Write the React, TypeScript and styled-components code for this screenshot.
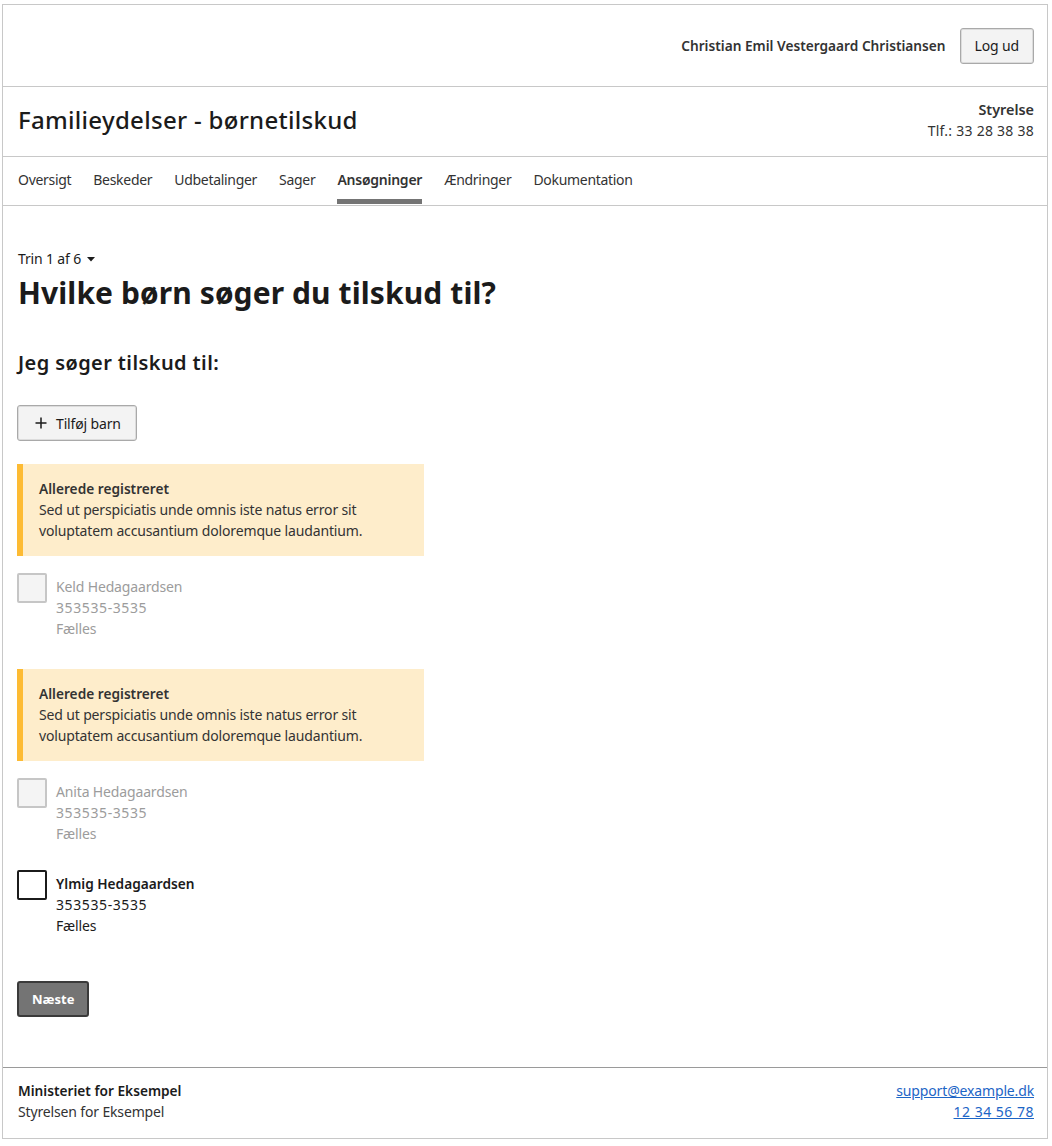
import React from "react";
import styled, { createGlobalStyle } from "styled-components";

const GlobalStyle = createGlobalStyle`
  html, body { margin: 0; padding: 0; background: #fff; }
  body {
    font-family: "Noto Sans", "Open Sans", sans-serif;
    font-size: 14px;
    line-height: 21px;
    letter-spacing: -0.15px;
    color: #1b1b1b;
  }
  * { box-sizing: border-box; }
`;

const Frame = styled.div`
  margin: 4px 0 0 2px;
  width: 1046px;
  border: 1px solid #c8c8c8;
  display: flex;
  flex-direction: column;
`;

const TopBar = styled.header`
  height: 82px;
  border-bottom: 1px solid #c8c8c8;
  display: flex;
  align-items: center;
  justify-content: flex-end;
  gap: 14px;
  padding: 0 13px 0 15px;
`;

const UserName = styled.span`
  font-size: 13.7px;
  font-weight: 600;
  letter-spacing: 0;
  color: #333;
`;

const SecondaryButton = styled.button`
  font-family: inherit;
  font-size: 14px;
  letter-spacing: -0.15px;
  color: #1b1b1b;
  background: #f3f3f3;
  border: 1px solid #a9a9a9;
  box-shadow: inset 0 0 0 1px #dcdcdc;
  border-radius: 3px;
  height: 36px;
  padding: 0 14px;
  display: inline-flex;
  align-items: center;
  gap: 9px;
  cursor: pointer;
`;

const TitleBar = styled.div`
  height: 70px;
  border-bottom: 1px solid #c8c8c8;
  display: flex;
  align-items: center;
  justify-content: space-between;
  padding: 0 13px 0 15px;
`;

const SiteTitle = styled.div`
  font-size: 24px;
  font-weight: 500;
  line-height: 32px;
  letter-spacing: 0.3px;
  color: #1b1b1b;
  padding-bottom: 3px;
`;

const Authority = styled.div`
  text-align: right;
  display: flex;
  flex-direction: column;
  padding-bottom: 3px;
`;

const AuthorityName = styled.span`
  font-size: 14.4px;
  font-weight: 600;
  letter-spacing: 0;
  color: #333;
  line-height: 21px;
`;

const AuthorityPhone = styled.span`
  font-size: 14px;
  letter-spacing: 0.25px;
  color: #333;
  line-height: 21px;
`;

const Nav = styled.nav`
  height: 49px;
  border-bottom: 1px solid #c8c8c8;
  display: flex;
  gap: 22px;
  padding: 0 15px;
`;

const NavItem = styled.a<{ $active?: boolean }>`
  display: flex;
  align-items: center;
  font-size: 14px;
  letter-spacing: ${(p) => (p.$active ? "-0.25px" : "-0.3px")};
  color: #333;
  font-weight: ${(p) => (p.$active ? 600 : 400)};
  text-decoration: none;
  border-bottom: 5px solid ${(p) => (p.$active ? "#747474" : "transparent")};
  margin-bottom: 1px;
  padding-top: 2px;
`;

const Main = styled.main`
  padding: 43px 15px 50px 14px;
  display: flex;
  flex-direction: column;
  align-items: flex-start;
`;

const Step = styled.div`
  font-size: 14px;
  line-height: 20px;
  color: #1b1b1b;
  display: flex;
  align-items: center;
  gap: 6px;
  padding-left: 1px;
`;

const H1 = styled.h1`
  margin: 5px 0 0 1px;
  font-size: 30px;
  line-height: 38px;
  font-weight: 700;
  letter-spacing: 0.1px;
  color: #1b1b1b;
`;

const H2 = styled.h2`
  margin: 37px 0 0 1px;
  font-size: 20px;
  line-height: 28px;
  font-weight: 600;
  letter-spacing: 0.4px;
  color: #1b1b1b;
`;

const AddButton = styled(SecondaryButton)`
  margin-top: 28px;
  padding: 0 15px 0 17px;
`;

const Alert = styled.div<{ $first?: boolean }>`
  margin-top: ${(p) => (p.$first ? 23 : 30)}px;
  width: 407px;
  background: #feedcb;
  border-left: 6px solid #fdbb33;
  padding: 14px 16px 15px;
  color: #333;
`;

const AlertTitle = styled.div`
  font-size: 13.7px;
  font-weight: 600;
  letter-spacing: 0;
  line-height: 21px;
`;

const AlertText = styled.div`
  font-size: 14px;
  line-height: 21px;
`;

const ChildRow = styled.label<{ $gap: number }>`
  margin-top: ${(p) => p.$gap}px;
  display: flex;
  gap: 9px;
  align-items: flex-start;
`;

const Box = styled.span<{ $disabled?: boolean }>`
  width: 30px;
  height: 30px;
  flex: none;
  border: 2px solid ${(p) => (p.$disabled ? "#c6c6c6" : "#1b1b1b")};
  background: ${(p) => (p.$disabled ? "#f4f4f4" : "#fff")};
  border-radius: 2px;
`;

const ChildInfo = styled.div<{ $disabled?: boolean }>`
  padding-top: 3px;
  display: flex;
  flex-direction: column;
  color: ${(p) => (p.$disabled ? "#9c9c9c" : "#1b1b1b")};
  font-size: 14px;
  line-height: 21px;
`;

const ChildName = styled.span<{ $disabled?: boolean }>`
  font-weight: ${(p) => (p.$disabled ? 400 : 600)};
  font-size: ${(p) => (p.$disabled ? 14 : 13.7)}px;
  letter-spacing: ${(p) => (p.$disabled ? "-0.15px" : "0")};
`;

const Cpr = styled.span`
  letter-spacing: 0.6px;
`;

const PrimaryButton = styled.button`
  margin-top: 45px;
  font-family: inherit;
  font-size: 13px;
  font-weight: 700;
  letter-spacing: 0;
  color: #fff;
  background: #747474;
  border: 2px solid #3a3a3a;
  border-radius: 3px;
  height: 36px;
  padding: 0 13px;
  cursor: pointer;
`;

const Footer = styled.footer`
  border-top: 1px solid #9a9a9a;
  padding: 12px 13px 16px 15px;
  display: flex;
  justify-content: space-between;
  font-size: 14px;
  line-height: 21px;
`;

const FooterCol = styled.div<{ $right?: boolean }>`
  display: flex;
  flex-direction: column;
  align-items: ${(p) => (p.$right ? "flex-end" : "flex-start")};
`;

const FooterStrong = styled.span`
  font-weight: 600;
  font-size: 13.7px;
  letter-spacing: 0;
  color: #1b1b1b;
`;

const FooterText = styled.span`
  color: #333;
`;

const FooterLink = styled.a<{ $digits?: boolean }>`
  color: #1d65c6;
  text-decoration: underline;
  font-size: 14px;
  letter-spacing: ${(p) => (p.$digits ? "0.5px" : "-0.15px")};
`;

const Plus = () => (
  <svg width="12" height="12" viewBox="0 0 12 12" aria-hidden>
    <path d="M6 0.5v11M0.5 6h11" stroke="#1b1b1b" strokeWidth="1.5" fill="none" />
  </svg>
);

const Caret = () => (
  <svg width="8" height="5" viewBox="0 0 8 5" aria-hidden>
    <path d="M0 0h8L4 4.5z" fill="#1b1b1b" />
  </svg>
);

const navItems = [
  "Oversigt",
  "Beskeder",
  "Udbetalinger",
  "Sager",
  "Ansøgninger",
  "Ændringer",
  "Dokumentation",
];

const alertBody = (
  <AlertText>
    Sed ut perspiciatis unde omnis iste natus error sit
    <br />
    voluptatem accusantium doloremque laudantium.
  </AlertText>
);

export default function App() {
  return (
    <>
      <GlobalStyle />
      <Frame>
        <TopBar>
          <UserName>Christian Emil Vestergaard Christiansen</UserName>
          <SecondaryButton>Log ud</SecondaryButton>
        </TopBar>
        <TitleBar>
          <SiteTitle>Familieydelser - børnetilskud</SiteTitle>
          <Authority>
            <AuthorityName>Styrelse</AuthorityName>
            <AuthorityPhone>Tlf.: 33 28 38 38</AuthorityPhone>
          </Authority>
        </TitleBar>
        <Nav>
          {navItems.map((n) => (
            <NavItem key={n} $active={n === "Ansøgninger"}>
              {n}
            </NavItem>
          ))}
        </Nav>
        <Main>
          <Step>
            Trin 1 af 6 <Caret />
          </Step>
          <H1>Hvilke børn søger du tilskud til?</H1>
          <H2>Jeg søger tilskud til:</H2>
          <AddButton>
            <Plus /> Tilføj barn
          </AddButton>

          <Alert $first>
            <AlertTitle>Allerede registreret</AlertTitle>
            {alertBody}
          </Alert>
          <ChildRow $gap={17}>
            <Box $disabled />
            <ChildInfo $disabled>
              <ChildName $disabled>Keld Hedagaardsen</ChildName>
              <Cpr>353535-3535</Cpr>
              <span>Fælles</span>
            </ChildInfo>
          </ChildRow>

          <Alert>
            <AlertTitle>Allerede registreret</AlertTitle>
            {alertBody}
          </Alert>
          <ChildRow $gap={17}>
            <Box $disabled />
            <ChildInfo $disabled>
              <ChildName $disabled>Anita Hedagaardsen</ChildName>
              <Cpr>353535-3535</Cpr>
              <span>Fælles</span>
            </ChildInfo>
          </ChildRow>

          <ChildRow $gap={26}>
            <Box />
            <ChildInfo>
              <ChildName>Ylmig Hedagaardsen</ChildName>
              <Cpr>353535-3535</Cpr>
              <span>Fælles</span>
            </ChildInfo>
          </ChildRow>

          <PrimaryButton>Næste</PrimaryButton>
        </Main>
        <Footer>
          <FooterCol>
            <FooterStrong>Ministeriet for Eksempel</FooterStrong>
            <FooterText>Styrelsen for Eksempel</FooterText>
          </FooterCol>
          <FooterCol $right>
            <FooterLink href="#">support@example.dk</FooterLink>
            <FooterLink href="#" $digits>
              12 34 56 78
            </FooterLink>
          </FooterCol>
        </Footer>
      </Frame>
    </>
  );
}
